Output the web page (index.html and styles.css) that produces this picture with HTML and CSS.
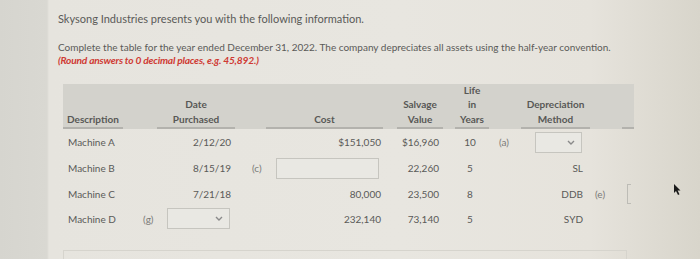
FILE: index.html
```html
<!DOCTYPE html>
<html>
<head>
<meta charset="utf-8">
<link rel="stylesheet" href="styles.css">
</head>
<body>
<div class="screen">
  <div class="content">
    <p class="intro">Skysong Industries presents you with the following information.</p>
    <p class="instr">Complete the table for the year ended December 31, 2022. The company depreciates all assets using the half-year convention.</p>
    <p class="note">(Round answers to 0 decimal places, e.g. 45,892.)</p>

    <div class="table">
      <div class="hc hd left">Description</div>
      <div class="hc"></div>
      <div class="hc hd">Date<br>Purchased</div>
      <div class="hc"></div>
      <div class="hc hd">Cost</div>
      <div class="hc"></div>
      <div class="hc hd">Salvage<br>Value</div>
      <div class="hc"></div>
      <div class="hc hd">Life<br>in<br>Years</div>
      <div class="hc"></div>
      <div class="hc hd">Depreciation<br>Method</div>
      <div class="hc"></div>
      <div class="hc hd"></div>

      <div class="c desc">Machine A</div>
      <div class="c"></div>
      <div class="c date">2/12/20</div>
      <div class="c"></div>
      <div class="c num cost">$151,050</div>
      <div class="c"></div>
      <div class="c num salv">$16,960</div>
      <div class="c"></div>
      <div class="c life">10</div>
      <div class="c mk mk-a">(a)</div>
      <div class="c"><div class="select sel-a"><svg class="chev" viewBox="0 0 8 5" width="8" height="5"><path d="M1 1 L4 4 L7 1" fill="none" stroke="#8a8a8a" stroke-width="1.4"/></svg></div></div>
      <div class="c"></div>
      <div class="c"></div>

      <div class="c desc">Machine B</div>
      <div class="c"></div>
      <div class="c date">8/15/19</div>
      <div class="c mk mk-c">(c)</div>
      <div class="c"><div class="input inp-c"></div></div>
      <div class="c"></div>
      <div class="c num salv">22,260</div>
      <div class="c"></div>
      <div class="c life">5</div>
      <div class="c"></div>
      <div class="c meth">SL</div>
      <div class="c"></div>
      <div class="c"></div>

      <div class="c desc">Machine C</div>
      <div class="c"></div>
      <div class="c date">7/21/18</div>
      <div class="c"></div>
      <div class="c num cost">80,000</div>
      <div class="c"></div>
      <div class="c num salv">23,500</div>
      <div class="c"></div>
      <div class="c life">8</div>
      <div class="c"></div>
      <div class="c meth">DDB</div>
      <div class="c mk mk-e">(e)</div>
      <div class="c"><div class="bracket"></div></div>

      <div class="c desc">Machine D</div>
      <div class="c mk mk-g">(g)</div>
      <div class="c"><div class="select sel-g"><svg class="chev" viewBox="0 0 8 5" width="8" height="5"><path d="M1 1 L4 4 L7 1" fill="none" stroke="#8a8a8a" stroke-width="1.4"/></svg></div></div>
      <div class="c"></div>
      <div class="c num cost">232,140</div>
      <div class="c"></div>
      <div class="c num salv">73,140</div>
      <div class="c"></div>
      <div class="c life">5</div>
      <div class="c"></div>
      <div class="c meth">SYD</div>
      <div class="c"></div>
      <div class="c"></div>
    </div>

    <div class="next"></div>
  </div>
  <svg class="cursor" viewBox="0 0 8 12" width="8" height="12"><path d="M1 0 L1 9 L3 7 L5 11 L6.5 10.3 L4.6 6.5 L7.5 6.5 Z" fill="#1a1a1a"/></svg>
</div>
</body>
</html>
```

FILE: styles.css
```css
html, body {
  margin: 0;
  padding: 0;
}
body {
  width: 700px;
  height: 259px;
  overflow: hidden;
  font-family: Lato, "Open Sans", sans-serif;
  color: #5a5a58;
  background: linear-gradient(to right, #d6d5cf 0, #d9d8d2 47px, #e6e4de 49px, #e8e6e0 400px, #e6e3dc 590px, #d8d5cb 700px);
}
.screen {
  position: relative;
  height: 259px;
  overflow: hidden;
}
.content {
  padding: 12px 0 0 58px;
}
.intro, .instr, .note {
  margin: 0;
  line-height: 13px;
}
.intro {
  font-size: 11px;
}
.instr {
  margin-top: 16px;
  font-size: 10px;
}
.note {
  font-size: 10.2px;
  color: #cf3a33;
  font-style: italic;
  font-weight: bold;
  letter-spacing: -0.2px;
}
.table {
  display: grid;
  grid-template-columns: 60px 34px 78px 31px 117px 14px 46px 12px 34px 32px 69px 32px 12px;
  grid-template-rows: 45px 26px 26px 25px 25px;
  margin: 17px 0 0 5px;
  width: 571px;
  font-size: 10px;
}
.hc {
  background: #d3d2cc;
  display: flex;
  align-items: flex-end;
  justify-content: center;
  text-align: center;
  font-weight: bold;
  line-height: 14.5px;
  padding-bottom: 3px;
  color: #585856;
}
.hd {
  border-bottom: 2px solid #b3b2ad;
  padding-bottom: 1px;
}
.hc.left {
  justify-content: flex-start;
  padding-left: 4px;
}
.c {
  display: flex;
  align-items: center;
  white-space: nowrap;
}
.desc {
  padding-left: 5px;
}
.date {
  justify-content: flex-end;
  padding-right: 4px;
}
.num {
  justify-content: flex-end;
}
.cost {
  padding-right: 2px;
}
.salv {
  padding-right: 4px;
}
.life {
  justify-content: center;
  padding-right: 4px;
}
.meth {
  justify-content: flex-end;
  padding-right: 7px;
}
.mk {
  color: #7a7a78;
  font-size: 10px;
}
.mk-g { padding-left: 20px; }
.mk-c { padding-left: 17px; }
.mk-a { padding-left: 10px; }
.mk-e { padding-left: 5px; }
.select, .input {
  box-sizing: border-box;
  height: 21px;
  border: 1px solid #c6c5bf;
  background: #e9e8e3;
  display: flex;
  align-items: center;
  justify-content: flex-end;
}
.sel-a {
  margin-left: 14px;
  width: 47px;
  padding-right: 6px;
}
.sel-g {
  margin-left: 10px;
  width: 63px;
  padding-right: 6px;
}
.inp-c {
  margin-left: 10px;
  width: 103px;
}
.bracket {
  margin-left: 5px;
  width: 4px;
  height: 20px;
  box-sizing: border-box;
  border: 1px solid #bdbcb6;
  border-right: none;
}
.next {
  margin: 19px 0 0 5px;
  width: 564px;
  height: 30px;
  box-sizing: border-box;
  border: 1px solid #d6d4cd;
}
.cursor {
  position: absolute;
  left: 673px;
  top: 184px;
}
```
